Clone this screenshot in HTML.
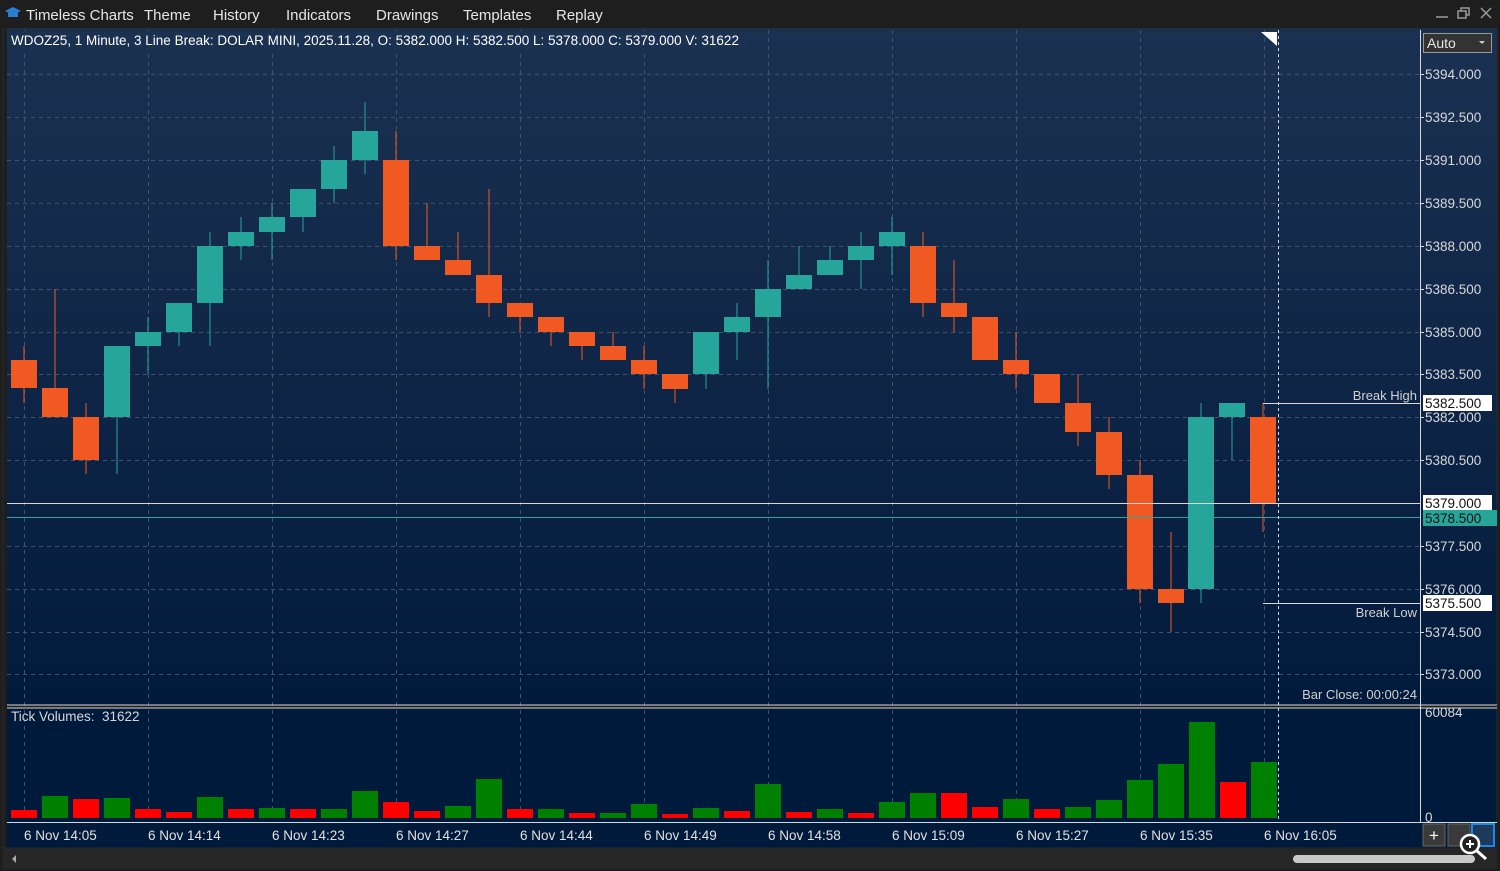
<!DOCTYPE html>
<html><head><meta charset="utf-8"><style>
html,body{margin:0;padding:0;background:#1e1e1e;width:1500px;height:871px;overflow:hidden;font-family:"Liberation Sans",sans-serif}
svg text{font-family:"Liberation Sans",sans-serif}
</style></head><body>
<svg width="1500" height="871" viewBox="0 0 1500 871" xmlns="http://www.w3.org/2000/svg">
<defs>
<linearGradient id="bg" x1="0" y1="0" x2="0" y2="1">
<stop offset="0" stop-color="#1b3152"/><stop offset="1" stop-color="#021a3c"/>
</linearGradient>
</defs>
<rect width="1500" height="871" fill="#1e1e1e"/>
<path d="M5 11 L13 7 L21 11 L13 15 Z" fill="#2a7fd4"/><path d="M8 13 v4 h10 v-4" fill="#2a7fd4"/>
<g fill="#e6e6e6" font-size="15">
<text x="26" y="20">Timeless Charts</text><text x="144" y="20">Theme</text><text x="213" y="20">History</text>
<text x="286" y="20">Indicators</text><text x="376" y="20">Drawings</text><text x="463" y="20">Templates</text><text x="556" y="20">Replay</text>
</g>
<g stroke="#9a9a9a" stroke-width="1.5" fill="none">
<line x1="1436" y1="17" x2="1448" y2="17"/>
<rect x="1458" y="11" width="8" height="7"/><path d="M1461 11 v-3 h8 v7 h-3"/>
<path d="M1481 8 l10 10 M1491 8 l-10 10"/>
</g>
<rect x="7" y="28" width="1413" height="677" fill="url(#bg)"/>
<rect x="1420" y="28" width="77" height="677" fill="url(#bg)"/>
<rect x="7" y="708" width="1490" height="114" fill="#001a3b"/>
<rect x="7" y="822" width="1490" height="26" fill="#001a3b"/>
<rect x="3" y="30" width="1494" height="818" fill="none" stroke="#2a2a2a" stroke-width="1"/>
<g stroke="#42526a" stroke-dasharray="4,4" stroke-width="1">
<line x1="7" y1="74.5" x2="1420" y2="74.5"/><line x1="7" y1="117.5" x2="1420" y2="117.5"/><line x1="7" y1="160.5" x2="1420" y2="160.5"/>
<line x1="7" y1="203.5" x2="1420" y2="203.5"/><line x1="7" y1="246.5" x2="1420" y2="246.5"/><line x1="7" y1="289.5" x2="1420" y2="289.5"/>
<line x1="7" y1="332.5" x2="1420" y2="332.5"/><line x1="7" y1="374.5" x2="1420" y2="374.5"/><line x1="7" y1="417.5" x2="1420" y2="417.5"/>
<line x1="7" y1="460.5" x2="1420" y2="460.5"/><line x1="7" y1="546.5" x2="1420" y2="546.5"/>
<line x1="7" y1="589.5" x2="1420" y2="589.5"/><line x1="7" y1="632.5" x2="1420" y2="632.5"/><line x1="7" y1="674.5" x2="1420" y2="674.5"/>
<line x1="24.5" y1="30" x2="24.5" y2="822"/><line x1="148.5" y1="30" x2="148.5" y2="822"/><line x1="272.5" y1="30" x2="272.5" y2="822"/>
<line x1="396.5" y1="30" x2="396.5" y2="822"/><line x1="520.5" y1="30" x2="520.5" y2="822"/><line x1="644.5" y1="30" x2="644.5" y2="822"/>
<line x1="768.5" y1="30" x2="768.5" y2="822"/><line x1="892.5" y1="30" x2="892.5" y2="822"/><line x1="1016.5" y1="30" x2="1016.5" y2="822"/>
<line x1="1140.5" y1="30" x2="1140.5" y2="822"/><line x1="1264.5" y1="30" x2="1264.5" y2="822"/>
</g>
<rect x="7" y="31" width="740" height="19" fill="#1a3152"/>
<text x="11" y="45" fill="#ffffff" font-size="13.5">WDOZ25, 1 Minute, 3 Line Break: DOLAR MINI, 2025.11.28, O: 5382.000 H: 5382.500 L: 5378.000 C: 5379.000 V: 31622</text>
<g stroke-width="1">
<g fill="#f05a22" stroke="#f05a22">
<line x1="24" y1="346" x2="24" y2="403"/><rect x="11" y="360" width="26" height="28" stroke="none"/>
<line x1="55" y1="289" x2="55" y2="417"/><rect x="42" y="388" width="26" height="29" stroke="none"/>
<line x1="86" y1="403" x2="86" y2="474"/><rect x="73" y="417" width="26" height="43" stroke="none"/>
<line x1="396" y1="131" x2="396" y2="260"/><rect x="383" y="160" width="26" height="86" stroke="none"/>
<line x1="427" y1="203" x2="427" y2="260"/><rect x="414" y="246" width="26" height="14" stroke="none"/>
<line x1="458" y1="232" x2="458" y2="275"/><rect x="445" y="260" width="26" height="15" stroke="none"/>
<line x1="489" y1="189" x2="489" y2="317"/><rect x="476" y="275" width="26" height="28" stroke="none"/>
<line x1="520" y1="303" x2="520" y2="332"/><rect x="507" y="303" width="26" height="14" stroke="none"/>
<line x1="551" y1="317" x2="551" y2="346"/><rect x="538" y="317" width="26" height="15" stroke="none"/>
<line x1="582" y1="332" x2="582" y2="360"/><rect x="569" y="332" width="26" height="14" stroke="none"/>
<line x1="613" y1="332" x2="613" y2="360"/><rect x="600" y="346" width="26" height="14" stroke="none"/>
<line x1="644" y1="346" x2="644" y2="389"/><rect x="631" y="360" width="26" height="14" stroke="none"/>
<line x1="675" y1="374" x2="675" y2="403"/><rect x="662" y="374" width="26" height="15" stroke="none"/>
<line x1="923" y1="232" x2="923" y2="317"/><rect x="910" y="246" width="26" height="57" stroke="none"/>
<line x1="954" y1="260" x2="954" y2="332"/><rect x="941" y="303" width="26" height="14" stroke="none"/>
<line x1="985" y1="317" x2="985" y2="360"/><rect x="972" y="317" width="26" height="43" stroke="none"/>
<line x1="1016" y1="332" x2="1016" y2="389"/><rect x="1003" y="360" width="26" height="14" stroke="none"/>
<line x1="1047" y1="374" x2="1047" y2="403"/><rect x="1034" y="374" width="26" height="29" stroke="none"/>
<line x1="1078" y1="374" x2="1078" y2="446"/><rect x="1065" y="403" width="26" height="29" stroke="none"/>
<line x1="1109" y1="417" x2="1109" y2="489"/><rect x="1096" y="432" width="26" height="43" stroke="none"/>
<line x1="1140" y1="460" x2="1140" y2="603"/><rect x="1127" y="475" width="26" height="114" stroke="none"/>
<line x1="1171" y1="532" x2="1171" y2="632"/><rect x="1158" y="589" width="26" height="14" stroke="none"/>
<line x1="1263" y1="403" x2="1263" y2="532"/><rect x="1250" y="417" width="26" height="86" stroke="none"/>
</g>
<g fill="#26a69a" stroke="#26a69a">
<line x1="117" y1="346" x2="117" y2="474"/><rect x="104" y="346" width="26" height="71" stroke="none"/>
<line x1="148" y1="317" x2="148" y2="374"/><rect x="135" y="332" width="26" height="14" stroke="none"/>
<line x1="179" y1="303" x2="179" y2="346"/><rect x="166" y="303" width="26" height="29" stroke="none"/>
<line x1="210" y1="232" x2="210" y2="346"/><rect x="197" y="246" width="26" height="57" stroke="none"/>
<line x1="241" y1="217" x2="241" y2="260"/><rect x="228" y="232" width="26" height="14" stroke="none"/>
<line x1="272" y1="203" x2="272" y2="260"/><rect x="259" y="217" width="26" height="15" stroke="none"/>
<line x1="303" y1="189" x2="303" y2="232"/><rect x="290" y="189" width="26" height="28" stroke="none"/>
<line x1="334" y1="146" x2="334" y2="203"/><rect x="321" y="160" width="26" height="29" stroke="none"/>
<line x1="365" y1="102" x2="365" y2="174"/><rect x="352" y="131" width="26" height="29" stroke="none"/>
<line x1="706" y1="332" x2="706" y2="389"/><rect x="693" y="332" width="26" height="42" stroke="none"/>
<line x1="737" y1="303" x2="737" y2="360"/><rect x="724" y="317" width="26" height="15" stroke="none"/>
<line x1="768" y1="260" x2="768" y2="389"/><rect x="755" y="289" width="26" height="28" stroke="none"/>
<line x1="799" y1="246" x2="799" y2="289"/><rect x="786" y="275" width="26" height="14" stroke="none"/>
<line x1="830" y1="246" x2="830" y2="275"/><rect x="817" y="260" width="26" height="15" stroke="none"/>
<line x1="861" y1="232" x2="861" y2="289"/><rect x="848" y="246" width="26" height="14" stroke="none"/>
<line x1="892" y1="217" x2="892" y2="275"/><rect x="879" y="232" width="26" height="14" stroke="none"/>
<line x1="1201" y1="403" x2="1201" y2="603"/><rect x="1188" y="417" width="26" height="172" stroke="none"/>
<line x1="1232" y1="403" x2="1232" y2="460"/><rect x="1219" y="403" width="26" height="14" stroke="none"/>
</g>
</g>
<line x1="7" y1="503.5" x2="1420" y2="503.5" stroke="#d8d8d8"/>
<line x1="7" y1="517.5" x2="1420" y2="517.5" stroke="#26a69a"/>
<line x1="1263" y1="403.5" x2="1420" y2="403.5" stroke="#d8d8d8"/>
<line x1="1263" y1="603.5" x2="1420" y2="603.5" stroke="#d8d8d8"/>
<line x1="1278.5" y1="30" x2="1278.5" y2="822" stroke="#d8d8d8" stroke-dasharray="3,3"/>
<path d="M1261 32 h16 v14 z" fill="#ffffff"/>
<text x="1417" y="400" fill="#d0d0d0" font-size="13" text-anchor="end">Break High</text>
<text x="1417" y="617" fill="#d0d0d0" font-size="13" text-anchor="end">Break Low</text>
<text x="1417" y="699" fill="#d0d0d0" font-size="13" text-anchor="end">Bar Close: 00:00:24</text>
<line x1="1420.5" y1="30" x2="1420.5" y2="822" stroke="#d8d8d8"/>
<g fill="#d8d8d8" font-size="13.5">
<text x="1425" y="79">5394.000</text><text x="1425" y="122">5392.500</text><text x="1425" y="165">5391.000</text>
<text x="1425" y="208">5389.500</text><text x="1425" y="251">5388.000</text><text x="1425" y="294">5386.500</text>
<text x="1425" y="337">5385.000</text><text x="1425" y="379">5383.500</text><text x="1425" y="422">5382.000</text>
<text x="1425" y="465">5380.500</text><text x="1425" y="551">5377.500</text><text x="1425" y="594">5376.000</text>
<text x="1425" y="637">5374.500</text><text x="1425" y="679">5373.000</text>
<text x="1425" y="717">60084</text><text x="1425" y="822">0</text>
</g>
<g stroke="#d8d8d8"><line x1="1420" y1="74.5" x2="1424" y2="74.5"/><line x1="1420" y1="117.5" x2="1424" y2="117.5"/><line x1="1420" y1="160.5" x2="1424" y2="160.5"/><line x1="1420" y1="203.5" x2="1424" y2="203.5"/><line x1="1420" y1="246.5" x2="1424" y2="246.5"/><line x1="1420" y1="289.5" x2="1424" y2="289.5"/><line x1="1420" y1="332.5" x2="1424" y2="332.5"/><line x1="1420" y1="374.5" x2="1424" y2="374.5"/><line x1="1420" y1="417.5" x2="1424" y2="417.5"/><line x1="1420" y1="460.5" x2="1424" y2="460.5"/><line x1="1420" y1="546.5" x2="1424" y2="546.5"/><line x1="1420" y1="589.5" x2="1424" y2="589.5"/><line x1="1420" y1="632.5" x2="1424" y2="632.5"/><line x1="1420" y1="674.5" x2="1424" y2="674.5"/></g>
<rect x="1423" y="395" width="69" height="16" fill="#ffffff"/><text x="1425" y="408" font-size="13.5" fill="#111">5382.500</text>
<rect x="1423" y="495" width="69" height="16" fill="#ffffff"/><text x="1425" y="508" font-size="13.5" fill="#111">5379.000</text>
<rect x="1423" y="510" width="74" height="16" fill="#26a69a"/><text x="1425" y="523" font-size="13.5" fill="#111">5378.500</text>
<rect x="1423" y="595" width="69" height="16" fill="#ffffff"/><text x="1425" y="608" font-size="13.5" fill="#111">5375.500</text>
<rect x="1423.5" y="33.5" width="68" height="19" fill="#333" stroke="#999"/>
<text x="1427" y="48" fill="#e6e6e6" font-size="14">Auto</text><path d="M1479 41 h6 l-3 3z" fill="#ccc"/>
<line x1="7" y1="705" x2="1497" y2="705" stroke="#d8d8d8"/><line x1="7" y1="708" x2="1497" y2="708" stroke="#d8d8d8"/>
<text x="11" y="721" fill="#d8d8d8" font-size="13.5" xml:space="preserve">Tick Volumes:  31622</text>
<g fill="#ff0000">
<rect x="11" y="810" width="26" height="8"/><rect x="73" y="799" width="26" height="19"/><rect x="135" y="809" width="26" height="9"/>
<rect x="166" y="812" width="26" height="6"/><rect x="228" y="809" width="26" height="9"/><rect x="290" y="809" width="26" height="9"/>
<rect x="383" y="802" width="26" height="16"/><rect x="414" y="811" width="26" height="7"/><rect x="507" y="809" width="26" height="9"/>
<rect x="569" y="813" width="26" height="5"/><rect x="662" y="814" width="26" height="4"/><rect x="724" y="811" width="26" height="7"/>
<rect x="786" y="812" width="26" height="6"/><rect x="848" y="813" width="26" height="5"/><rect x="941" y="793" width="26" height="25"/>
<rect x="972" y="807" width="26" height="11"/><rect x="1034" y="809" width="26" height="9"/><rect x="1220" y="782" width="26" height="36"/>
</g>
<g fill="#008000">
<rect x="42" y="796" width="26" height="22"/><rect x="104" y="798" width="26" height="20"/><rect x="197" y="797" width="26" height="21"/>
<rect x="259" y="808" width="26" height="10"/><rect x="321" y="809" width="26" height="9"/><rect x="352" y="791" width="26" height="27"/>
<rect x="445" y="806" width="26" height="12"/><rect x="476" y="779" width="26" height="39"/><rect x="538" y="809" width="26" height="9"/>
<rect x="600" y="813" width="26" height="5"/><rect x="631" y="804" width="26" height="14"/><rect x="693" y="808" width="26" height="10"/>
<rect x="755" y="784" width="26" height="34"/><rect x="817" y="809" width="26" height="9"/><rect x="879" y="802" width="26" height="16"/>
<rect x="910" y="793" width="26" height="25"/><rect x="1003" y="799" width="26" height="19"/><rect x="1065" y="807" width="26" height="11"/>
<rect x="1096" y="800" width="26" height="18"/><rect x="1127" y="780" width="26" height="38"/><rect x="1158" y="764" width="26" height="54"/>
<rect x="1189" y="722" width="26" height="96"/><rect x="1251" y="762" width="26" height="56"/>
</g>
<line x1="7" y1="822.5" x2="1497" y2="822.5" stroke="#d8d8d8"/>
<g fill="#e0e0e0" font-size="13.5">
<text x="24" y="840">6 Nov 14:05</text><text x="148" y="840">6 Nov 14:14</text><text x="272" y="840">6 Nov 14:23</text>
<text x="396" y="840">6 Nov 14:27</text><text x="520" y="840">6 Nov 14:44</text><text x="644" y="840">6 Nov 14:49</text>
<text x="768" y="840">6 Nov 14:58</text><text x="892" y="840">6 Nov 15:09</text><text x="1016" y="840">6 Nov 15:27</text>
<text x="1140" y="840">6 Nov 15:35</text><text x="1264" y="840">6 Nov 16:05</text>
</g>
<rect x="1423" y="824" width="22" height="22" fill="#3a3a3a" stroke="#666"/><text x="1434" y="841" fill="#fff" font-size="17" text-anchor="middle">+</text>
<rect x="1448" y="824" width="22" height="22" fill="#3a3a3a" stroke="#666"/>
<rect x="1472" y="824" width="22" height="22" fill="#1d3a5a" stroke="#1e88e5" stroke-width="2"/>
<rect x="3" y="849" width="1494" height="20" fill="#262626"/>
<path d="M16 855 v8 l-4 -4z" fill="#aaa"/>
<rect x="1293" y="855" width="182" height="8" rx="4" fill="#c8c8c8"/>
<circle cx="1470" cy="844" r="9" fill="#222" stroke="#fff" stroke-width="2.5"/><line x1="1476" y1="850" x2="1486" y2="859" stroke="#fff" stroke-width="3"/>
<path d="M1466 844 h8 M1470 840 v8" stroke="#fff" stroke-width="2"/>
</svg>
</body></html>
